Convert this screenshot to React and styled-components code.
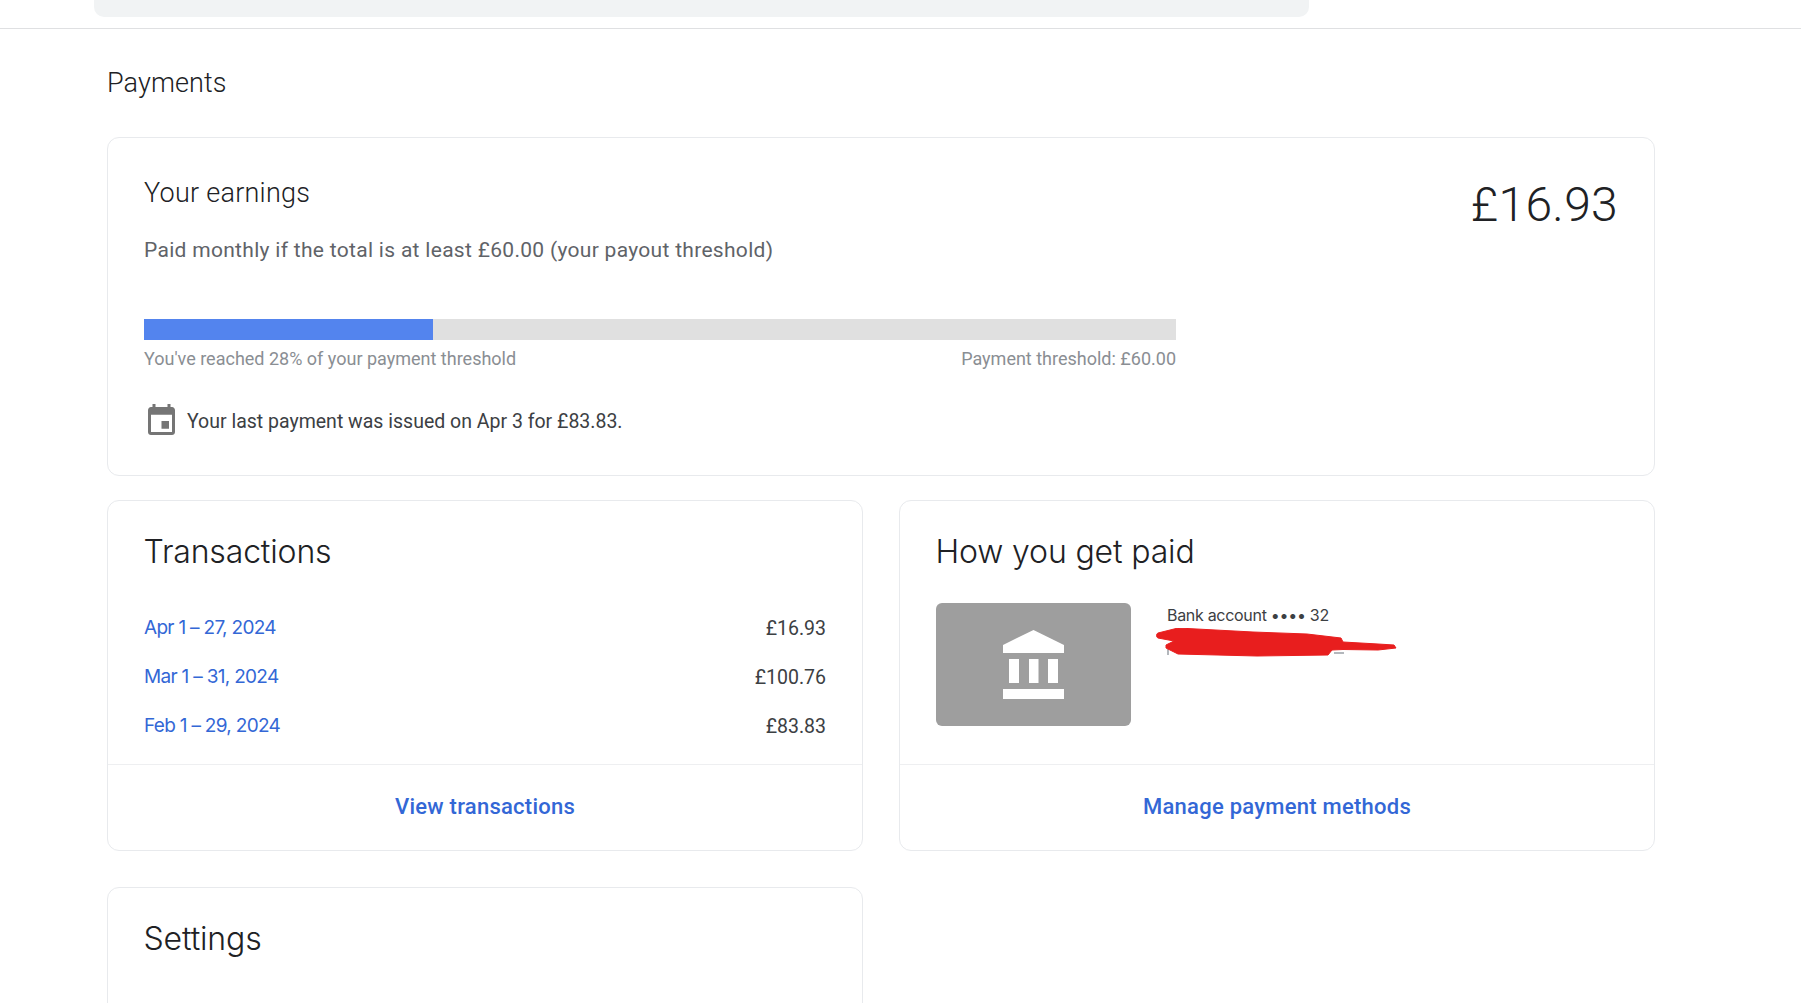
import React from 'react'
import styled, { createGlobalStyle } from 'styled-components'

const GlobalStyle = createGlobalStyle`
  html, body {
    margin: 0;
    height: 100%;
    overflow: hidden;
    background: #fff;
    font-family: Roboto, "Liberation Sans", sans-serif;
    color: #202124;
  }
`

const TopBar = styled.div`
  height: 28px;
  padding-left: 94px;
  border-bottom: 1px solid #dfe0e2;
`

const SearchBar = styled.div`
  width: 1215px;
  height: 17px;
  background: #f1f3f4;
  border-radius: 0 0 10px 10px;
`

const Page = styled.main`
  width: 1548px;
  margin-left: 107px;
`

const PageTitle = styled.h1`
  margin: 0;
  height: 108px;
  display: flex;
  align-items: center;
  font-size: 27px;
  font-weight: 300;
  letter-spacing: 0.1px;
`

const Card = styled.section`
  box-sizing: border-box;
  background: #fff;
  border: 1px solid #e8eaed;
  border-radius: 12px;
  min-width: 0;
`

const EarningsCard = styled(Card)`
  height: 339px;
  margin-bottom: 24px;
  padding: 38px 36px 0;
  display: flex;
  justify-content: space-between;
`

const EarningsMain = styled.div`
  width: 1032px;
`

const EarningsTitle = styled.h2`
  margin: 0;
  font-size: 27px;
  line-height: 34px;
  font-weight: 300;
  letter-spacing: 0.25px;
`

const EarningsNote = styled.p`
  margin: 26px 0 0;
  font-size: 21px;
  line-height: 28px;
  letter-spacing: 0.3px;
  color: #5f6368;
`

const Track = styled.div`
  height: 21px;
  margin-top: 55px;
  background: #e0e0e0;
`

const Fill = styled.div`
  height: 100%;
  background: #5384ee;
`

const ProgressLabels = styled.div`
  display: flex;
  justify-content: space-between;
  margin-top: 8px;
  font-size: 18px;
  line-height: 22px;
  color: #8a8e93;
`

const LastPayment = styled.div`
  display: flex;
  align-items: center;
  gap: 11px;
  margin-top: 37px;
  padding-left: 4px;
  font-size: 19.5px;
  color: #3c4043;
`

const CalendarSvg = styled.svg`
  width: 27px;
  height: 31px;
  margin: -3px 1px 0 0;
  fill: #757575;
`

const Total = styled.div`
  font-size: 48px;
  line-height: 56px;
  font-weight: 300;
  letter-spacing: 0.3px;
  color: #202124;
  margin-top: 1px;
`

const Columns = styled.div`
  display: grid;
  grid-template-columns: 756px 756px;
  column-gap: 36px;
  row-gap: 36px;
`

const SummaryCard = styled(Card)`
  height: 351px;
  display: flex;
  flex-direction: column;
`

const CardBody = styled.div`
  flex: 1;
  padding: 29px 36px 0;
`

const CardTitle = styled.h2`
  margin: 0 0 0 -0.5px;
  font-family: Inter, sans-serif;
  font-size: 32px;
  line-height: 44px;
  font-weight: 300;
  letter-spacing: -0.15px;
`

const TransactionList = styled.div`
  margin-top: 29px;
`

const TransactionRow = styled.div`
  display: flex;
  justify-content: space-between;
  height: 49px;
  line-height: 49px;
`

const PeriodLink = styled.a`
  font-family: Inter, sans-serif;
  font-size: 19px;
  letter-spacing: -0.7px;
  color: #3367d6;
`

const Amount = styled.span`
  position: relative;
  top: 1px;
  color: #3c4043;
  font-size: 19.5px;
`

const CardFooter = styled.div`
  box-sizing: border-box;
  height: 86px;
  padding-bottom: 3px;
  display: flex;
  align-items: center;
  justify-content: center;
  border-top: 1px solid #eeeff1;
  font-size: 22px;
  font-weight: 500;
  letter-spacing: 0.25px;
  color: #3367d6;
`

const PaymentMethod = styled.div`
  display: flex;
  gap: 36px;
  margin-top: 29px;
`

const BankTile = styled.div`
  width: 195px;
  height: 123px;
  display: flex;
  align-items: center;
  justify-content: center;
  background: #9e9e9e;
  border-radius: 6px;
`

const MethodInfo = styled.div`
  position: relative;
  flex: 1;
`

const MethodName = styled.div`
  font-family: Inter, sans-serif;
  font-size: 16px;
  line-height: 24px;
  letter-spacing: -0.3px;
  color: #3c4043;
`

const Redaction = styled.svg`
  position: absolute;
  left: -11px;
  top: 25px;
`

const SettingsCard = styled(Card)`
  height: 200px;
  padding: 29px 36px 0;
`

const CalendarIcon = () => (
  <CalendarSvg viewBox="3 1 18 20" preserveAspectRatio="none">
    <path d="M17 12h-5v5h5v-5zM16 1v2H8V1H6v2H5c-1.11 0-1.99.9-1.99 2L3 19c0 1.1.89 2 2 2h14c1.1 0 2-.9 2-2V5c0-1.1-.9-2-2-2h-1V1h-2zm3 18H5V8h14v11z" />
  </CalendarSvg>
)

const BankIcon = () => (
  <svg width="61" height="69" viewBox="0 0 61 69" fill="#fff">
    <path d="M0 15 30.5 0 61 15v8H0z" />
    <rect x="6" y="29" width="10" height="24" />
    <rect x="26" y="29" width="9.5" height="24" />
    <rect x="45" y="29" width="10" height="24" />
    <rect x="0" y="59" width="61" height="10" />
  </svg>
)

const transactions = [
  { period: 'Apr 1 – 27, 2024', amount: '£16.93' },
  { period: 'Mar 1 – 31, 2024', amount: '£100.76' },
  { period: 'Feb 1 – 29, 2024', amount: '£83.83' },
]

export default function App() {
  return (
    <>
      <GlobalStyle />
      <TopBar>
        <SearchBar />
      </TopBar>
      <Page>
        <PageTitle>Payments</PageTitle>
        <EarningsCard>
          <EarningsMain>
            <EarningsTitle>Your earnings</EarningsTitle>
            <EarningsNote>Paid monthly if the total is at least £60.00 (your payout threshold)</EarningsNote>
            <Track>
              <Fill style={{ width: '28%' }} />
            </Track>
            <ProgressLabels>
              <span>You've reached 28% of your payment threshold</span>
              <span>Payment threshold: £60.00</span>
            </ProgressLabels>
            <LastPayment>
              <CalendarIcon />
              <span>Your last payment was issued on Apr 3 for £83.83.</span>
            </LastPayment>
          </EarningsMain>
          <Total>£16.93</Total>
        </EarningsCard>
        <Columns>
          <SummaryCard>
            <CardBody>
              <CardTitle>Transactions</CardTitle>
              <TransactionList>
                {transactions.map(t => (
                  <TransactionRow key={t.period}>
                    <PeriodLink>{t.period}</PeriodLink>
                    <Amount>{t.amount}</Amount>
                  </TransactionRow>
                ))}
              </TransactionList>
            </CardBody>
            <CardFooter>View transactions</CardFooter>
          </SummaryCard>
          <SummaryCard>
            <CardBody>
              <CardTitle>How you get paid</CardTitle>
              <PaymentMethod>
                <BankTile>
                  <BankIcon />
                </BankTile>
                <MethodInfo>
                  <MethodName>Bank account •••• 32</MethodName>
                  <Redaction width="242" height="30" viewBox="0 0 242 30">
                    <path d="M12 21v6M178 25h10" stroke="#9aa0a6" strokeWidth="1.5" fill="none" />
                    <path
                      d="M2 5 22 0l75 4 54 2 34 4 2 4 35 2 16 1 2 3-18 2-35-.5-11 .5-4 5-71 1-79-2-12-6v-3l8-4L2 10c-2-1-2-4 0-5z"
                      fill="#e81e1e"
                      stroke="#e81e1e"
                      strokeWidth="1"
                      strokeLinejoin="round"
                    />
                  </Redaction>
                </MethodInfo>
              </PaymentMethod>
            </CardBody>
            <CardFooter>Manage payment methods</CardFooter>
          </SummaryCard>
          <SettingsCard>
            <CardTitle>Settings</CardTitle>
          </SettingsCard>
        </Columns>
      </Page>
    </>
  )
}
